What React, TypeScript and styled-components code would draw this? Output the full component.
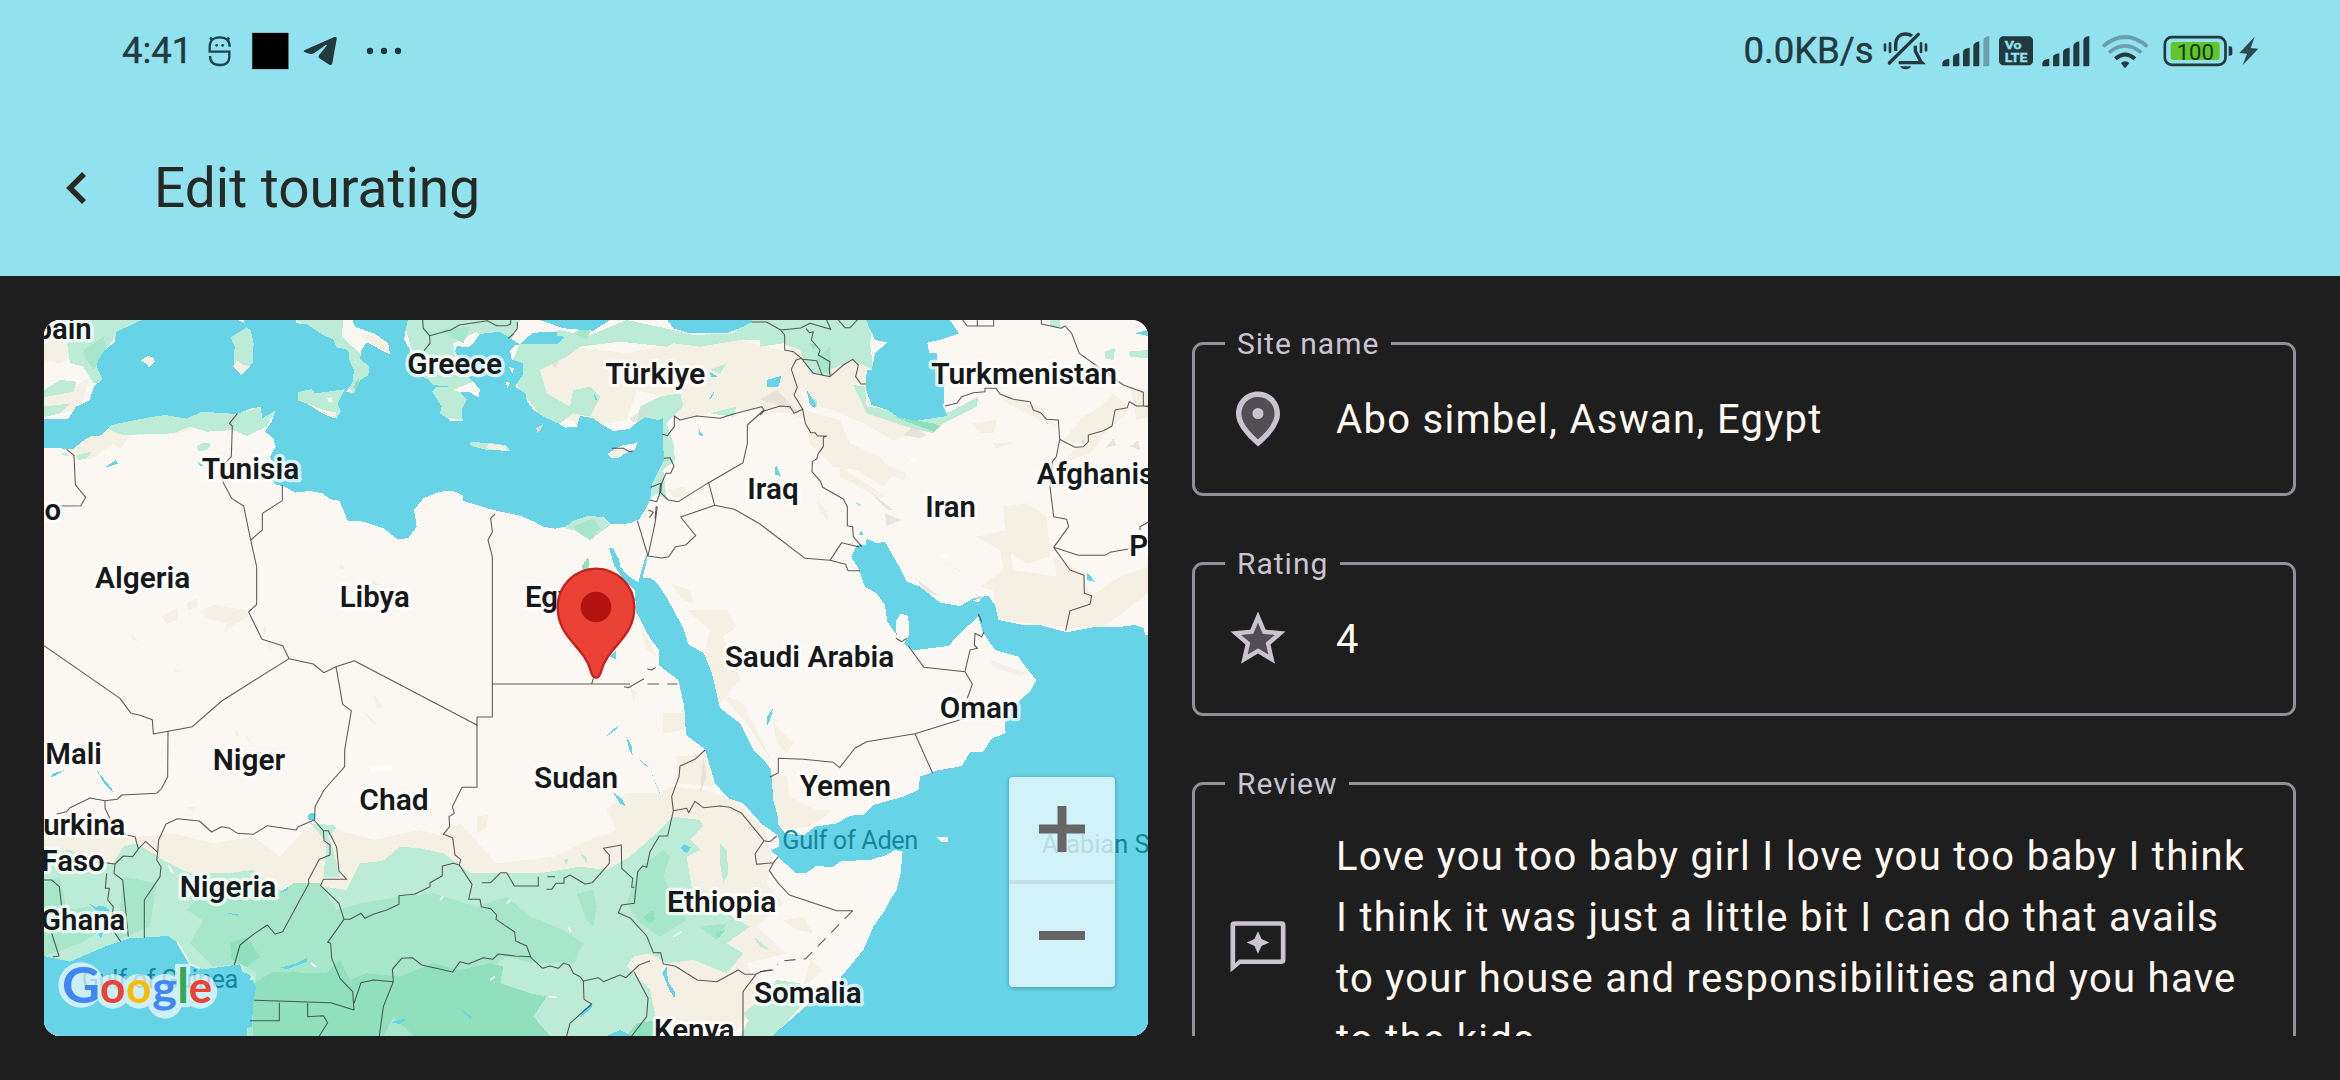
import React from 'react';
import styled, { createGlobalStyle } from 'styled-components';

const INK = '#22393d';
const FAINT = '#68a1ab';
const SKY = '#92e1ef';
const SURFACE = '#1e1e1e';

const GlobalStyle = createGlobalStyle`
  * { box-sizing: border-box; }
  body { margin: 0; background: ${SURFACE}; }
`;

const Screen = styled.div`
  width: 2340px;
  height: 1080px;
  overflow: hidden;
  background: ${SURFACE};
  font-family: Roboto, 'Liberation Sans', sans-serif;
  display: flex;
  flex-direction: column;
`;

const Header = styled.header`
  flex: none;
  height: 276px;
  background: ${SKY};
  display: flex;
  flex-direction: column;
`;

const StatusBar = styled.div`
  height: 101px;
  display: flex;
  justify-content: space-between;
  padding: 0 81px 0 122px;
  color: ${INK};
`;

const StatusGroup = styled.div`
  display: flex;
  align-items: center;
`;

const StatusText = styled.span<{ $width: number }>`
  width: ${(p) => p.$width}px;
  font-size: 36.5px;
  line-height: 42px;
  white-space: nowrap;
  -webkit-text-stroke: 0.4px ${INK};
`;

const Glyph = styled.svg<{ $w: number; $h: number; $ml?: number }>`
  display: block;
  flex: none;
  width: ${(p) => p.$w}px;
  height: ${(p) => p.$h}px;
  margin-left: ${(p) => p.$ml ?? 0}px;
`;

const AppBar = styled.div`
  flex: 1;
  display: flex;
  align-items: center;
  padding: 0 0 2px 64px;
`;

const BackButton = styled.button`
  width: 90px;
  height: 60px;
  padding: 0;
  border: 0;
  background: none;
  display: flex;
  align-items: center;
`;

const Title = styled.h1`
  margin: 0;
  font-size: 55px;
  font-weight: 400;
  line-height: 70px;
  color: #252a24;
  white-space: nowrap;
`;

const Content = styled.main`
  height: 760px;
  padding: 44px 44px 0;
  display: grid;
  grid-template-columns: 1104px 1104px;
  grid-template-rows: 716px;
  column-gap: 44px;
`;

const MapCard = styled.section`
  position: relative;
  border-radius: 16px;
  overflow: hidden;
  background: #fbf8f3;
`;

const MapCanvas = styled.svg`
  display: block;
  width: 1104px;
  height: 716px;
`;

const ZoomControl = styled.div`
  position: absolute;
  right: 33px;
  bottom: 49px;
  width: 106px;
  height: 210px;
  border-radius: 4px;
  background: rgba(255, 255, 255, 0.7);
  box-shadow: 0 1px 4px rgba(0, 0, 0, 0.32);
  display: flex;
  flex-direction: column;
`;

const ZoomButton = styled.button`
  flex: 1;
  padding: 0;
  border: 0;
  background: none;
  display: flex;
  align-items: center;
  justify-content: center;

  & + & {
    border-top: 4px solid #c3dfe5;
  }
`;

const Form = styled.section`
  overflow: hidden;
  padding: 6px 0 0;
  display: flex;
  flex-direction: column;
  gap: 50px;
`;

const FieldBox = styled.fieldset<{ $tall?: boolean }>`
  flex: none;
  min-width: 0;
  height: ${(p) => (p.$tall ? 334 : 170)}px;
  margin: 0;
  padding: ${(p) => (p.$tall ? '25px 29px 24px 30px' : '0 29px 16px 30px')};
  border: 3px solid #938f99;
  border-radius: 11px;
`;

const FieldLabel = styled.legend`
  padding: 0 12px;
  height: 35px;
  font-size: 30px;
  line-height: 35px;
  letter-spacing: 1px;
  color: #cac4d0;
`;

const FieldRow = styled.div<{ $tall?: boolean }>`
  height: ${(p) => (p.$tall ? 244 : 116)}px;
  display: flex;
  align-items: center;
  gap: 45px;
`;

const FieldValue = styled.div`
  font-size: 40px;
  line-height: 61px;
  letter-spacing: 1.290px;
  white-space: pre;
  color: #fef8f1;
`;

const HelmetIcon = () => (
  <Glyph $w={26} $h={34} $ml={16.300} viewBox="52 38 78 102" fill="none" stroke="#1d4549" strokeWidth="7">
    <path d="M120 76 C120 56 108 48 90 48 C70 48 60 60 60 76 V91 H119 V106 C119 122 108 131 90 131 C72 131 61 122 61 104" />
    <path d="M61 49 L68 55 M119 49 L112 55" strokeWidth="8" />
    <circle cx="81" cy="72" r="4" fill="#1d4549" stroke="none" />
    <circle cx="99" cy="72" r="4" fill="#1d4549" stroke="none" />
  </Glyph>
);

const SquareIcon = () => (
  <Glyph $w={39} $h={38} $ml={17.400} viewBox="182 33 117 114">
    <rect x="184" y="34" width="112" height="112" fill="#7fb4be" />
    <rect x="186" y="36" width="108" height="108" fill="#000" />
  </Glyph>
);

const TelegramIcon = () => (
  <Glyph $w={34} $h={30} $ml={13.300} viewBox="339 49 102 90">
    <path d="M343 92 L433 52 Q441 50 440 58 L427 131 Q425 138 418 135 L388 116 Q383 112 387 107 L410 78 Q412 74 407 76 L372 101 Q366 104 358 102 L343 97 Q339 95 343 92Z" fill={INK} />
  </Glyph>
);

const DotsIcon = () => (
  <Glyph $w={36} $h={10} $ml={29} viewBox="528 75 108 30" fill="#1d3438">
    <circle cx="540" cy="90" r="9.500" />
    <circle cx="582" cy="90" r="9.500" />
    <circle cx="624" cy="90" r="9.500" />
  </Glyph>
);

const MutedBellIcon = () => (
  <Glyph $w={46} $h={40} viewBox="37 32 138 120" fill="none" stroke={INK} strokeWidth="10" strokeLinecap="round">
    <path d="M75 92 V74 C75 52 88 41 105 41 C113 41 119 43 124 47" strokeLinecap="butt" />
    <path d="M56 128 L143 42" />
    <path d="M134 76 V92 L150 123 L154 127 H84" strokeLinecap="butt" />
    <path d="M88 138 H122 Q116 147 105 147 Q94 147 88 138Z" fill={INK} stroke="none" />
    <path d="M43 73 V90 M58 69 V95 M151 69 V95 M166 73 V90" strokeWidth="8" />
  </Glyph>
);

const SignalIcon = ({ weak, ml }: { weak?: boolean; ml: number }) => (
  <Glyph $w={49} $h={32} $ml={ml} viewBox="211 43 147 96" fill={INK}>
    <path d="M215 137 V126 Q218 115 236 114 V133 Q236 137 232 137Z" />
    <path d="M247 137 V108 Q249 100 266 98 V133 Q266 137 262 137Z" />
    <path d="M277 137 V93 Q279 83 297 81 V133 Q297 137 293 137Z" />
    <path d="M308 137 V76 Q309 65 326 62 V133 Q326 137 322 137Z" />
    <path d="M338 137 V60 Q339 48 356 46 V133 Q356 137 352 137Z" fill={weak ? FAINT : INK} />
  </Glyph>
);

const VolteIcon = () => (
  <Glyph $w={34} $h={30} $ml={9} viewBox="384 47 102 90">
    <rect x="384" y="48" width="102" height="87" rx="13" fill={INK} />
    <g fill={SKY} stroke={SKY} strokeWidth="1" fontFamily="Roboto, sans-serif" fontWeight="700">
      <text x="401" y="86" fontSize="34" textLength="51" lengthAdjust="spacingAndGlyphs">Vo</text>
      <text x="401" y="124" fontSize="38" textLength="68" lengthAdjust="spacingAndGlyphs">LTE</text>
    </g>
  </Glyph>
);

const WifiIcon = () => (
  <Glyph $w={48} $h={36} $ml={11} viewBox="692 36 144 108" fill="none" strokeWidth="11">
    <path d="M698 76 Q764 20 831 76" stroke={FAINT} />
    <path d="M716 95 Q764 54 813 95" stroke={FAINT} />
    <path d="M735 113 Q764 88 794 113" stroke={INK} strokeWidth="12" />
    <path d="M752 126 Q764 115 777 126 L767 139 Q764 142 761 139Z" fill={INK} />
  </Glyph>
);

const BatteryIcon = () => (
  <Glyph $w={70} $h={32} $ml={14} viewBox="877 42 210 96">
    <rect x="882.500" y="48.500" width="182" height="83" rx="21" fill="none" stroke={INK} strokeWidth="8" />
    <rect x="900" y="63" width="147" height="54" rx="8" fill="#60c62b" />
    <path d="M1074 76 h4 q7 0 7 8 v12 q0 8 -7 8 h-4Z" fill={INK} />
    <text x="974" y="116" textAnchor="middle" fontSize="68" fill="#12360e" fontFamily="Roboto, sans-serif" textLength="112" lengthAdjust="spacingAndGlyphs">
      100
    </text>
  </Glyph>
);

const BoltIcon = () => (
  <Glyph $w={20} $h={30} $ml={6.500} viewBox="1106 44 60 90">
    <path d="M1153 46 L1107 95 L1130 97 L1117 132 L1164 82 L1141 80Z" fill="#2c4b50" />
  </Glyph>
);

const PlaceIcon = () => (
  <Glyph $w={66} $h={66} viewBox="0 0 24 24" fill="#cac4d0">
    <path opacity=".3" d="M18 10.200c0 2.570-2.100 5.790-6 9.140-3.900-3.350-6-6.570-6-9.140C6 6.570 8.650 4 12 4s6 2.570 6 6.200z" />
    <path fillRule="evenodd" d="M12 2c-4.200 0-8 3.220-8 8.200 0 3.320 2.670 7.250 8 11.800 5.330-4.550 8-8.480 8-11.800C20 5.220 16.200 2 12 2zM18 10.200c0 2.570-2.100 5.790-6 9.140-3.900-3.350-6-6.570-6-9.140C6 6.570 8.650 4 12 4s6 2.570 6 6.200z" />
    <circle cx="12" cy="10" r="2" />
  </Glyph>
);

const StarIcon = () => (
  <Glyph $w={66} $h={66} viewBox="0 0 24 24" fill="#cac4d0">
    <path opacity=".3" d="M12 15.400l-3.760 2.270 1-4.280-3.320-2.880 4.380-.38L12 6.100l1.710 4.040 4.380.38-3.320 2.880 1 4.280z" />
    <path d="M22 9.240l-7.190-.62L12 2 9.190 8.630 2 9.240l5.460 4.730L5.820 21 12 17.270 18.180 21l-1.630-7.030L22 9.240zM12 15.400l-3.760 2.270 1-4.280-3.320-2.880 4.380-.38L12 6.100l1.710 4.040 4.380.38-3.320 2.880 1 4.280L12 15.400z" />
  </Glyph>
);

const ReviewIcon = () => (
  <Glyph $w={66} $h={66} viewBox="0 0 24 24" fill="#cac4d0">
    <path fillRule="evenodd" d="M20.600 2.300H3.400Q2 2.300 2 3.700V20.800L5.600 17.800H20.600Q22 17.800 22 16.400V3.700Q22 2.300 20.600 2.300ZM20.300 16.200H5.100L3.700 17.500V3.900H20.300Z" />
    <path d="M12 5.900l1.280 2.820L16.100 10l-2.820 1.280L12 14.100l-1.280-2.820L7.900 10l2.820-1.280z" />
  </Glyph>
);

type Label = { t: string; x: number; y: number; w?: number; anchor?: 'start' | 'end' };

const countries: Label[] = [
  { t: 'Spain', x: 155, y: 86, anchor: 'end' },
  { t: 'Greece', x: 1102, y: 192, w: 284 },
  { t: 'Türkiye', x: 1696, y: 222, w: 300 },
  { t: 'Turkmenistan', x: 2674, y: 222, w: 557 },
  { t: 'Tunisia', x: 485, y: 506, w: 293 },
  { t: 'Morocco', x: 63, y: 630, anchor: 'end' },
  { t: 'Algeria', x: 165, y: 833, w: 286 },
  { t: 'Libya', x: 899, y: 890, w: 210 },
  { t: 'Egypt', x: 1455, y: 891 },
  { t: 'Iraq', x: 2122, y: 566, w: 154 },
  { t: 'Iran', x: 2656, y: 620, w: 152 },
  { t: 'Afghanistan', x: 2990, y: 522 },
  { t: 'Pakistan', x: 3268, y: 737 },
  { t: 'Saudi Arabia', x: 2054, y: 1071, w: 509 },
  { t: 'Oman', x: 2699, y: 1225, w: 237 },
  { t: 'Yemen', x: 2279, y: 1458, w: 274 },
  { t: 'Mali', x: 16, y: 1361, w: 170 },
  { t: 'Niger', x: 518, y: 1380, w: 218 },
  { t: 'Chad', x: 958, y: 1500, w: 208 },
  { t: 'Sudan', x: 1482, y: 1434, w: 252 },
  { t: 'Burkina', x: 256, y: 1575, anchor: 'end' },
  { t: 'Faso', x: 194, y: 1682, anchor: 'end' },
  { t: 'Ghana', x: 256, y: 1861, anchor: 'end' },
  { t: 'Nigeria', x: 419, y: 1760, w: 290 },
  { t: 'Ethiopia', x: 1881, y: 1805, w: 328 },
  { t: 'Somalia', x: 2142, y: 2078, w: 323 },
  { t: 'Kenya', x: 1842, y: 2189, w: 242 },
];

const seas: Label[] = [
  { t: 'Gulf of Aden', x: 2227, y: 1617, w: 408 },
  { t: 'Arabian Sea', x: 3005, y: 1630 },
  { t: 'Gulf of Guinea', x: 125, y: 2033, w: 470 },
];

const BEIGE = '#f4f0e4';
const MINT = '#bcecd8';
const MINT2 = '#a8e6cc';
const MINT3 = '#90e0bd';
const WATER = '#66d3e7';
const GREY = '#dcd9d2';

const beigeNorth = [
  'M12 30H150L130 120L60 160L12 150Z',
  'M12 250L90 240L150 200L120 300L12 320Z',
  'M60 420L140 385L240 340L480 345L420 370L270 375L240 420L220 400L160 445L110 450Z',
  'M365 920L412 893L415 930L380 942ZM440 880L470 865L475 890L445 900ZM478 905L520 885L620 900L625 920L580 945L550 972L560 940L500 925Z',
  'M270 965L293 992L278 990ZM895 765L915 768L908 780ZM1000 812L1030 830L995 822ZM672 940L680 960L670 985ZM690 990L695 1022L680 1010ZM402 1078L432 1084L405 1088Z',
  'M1480 160L1600 110L1760 130L1900 100L2100 90L2260 130L2300 330L2240 310L2150 300L2050 300L1960 320L1880 320L1900 270L1790 240L1760 330L1640 350L1540 310L1480 320L1440 240L1500 200Z',
  'M2240 30H2480L2490 130L2470 250L2600 320L2680 360L2560 390L2470 340L2380 300L2330 290L2250 200Z',
  'M2290 300L2400 330L2430 400L2520 440L2560 500L2530 530L2450 480L2380 470L2310 400Z',
  'M2490 440L2600 490L2590 510L2500 470ZM2400 470L2540 560L2520 565L2400 500ZM2330 570L2360 600L2365 635L2335 600ZM2860 400L2930 395L2870 415ZM2800 340L2870 330L2860 370L2820 370Z',
  'M2870 240L3000 290L3050 350L3020 340L2900 280ZM3070 390L3130 320L3180 290L3220 250L3270 300L3230 340L3130 400ZM3270 230L3324 240V320L3290 330Z',
  'M2890 590L2960 580L3020 620L3030 740L2960 760L2900 720Z',
  'M2810 680L2900 660L2920 780L3050 800L3040 740L3130 790L3150 860L3240 800L3324 770V850L3180 960L2870 930L2860 840L2820 830L2890 780L2880 720Z',
  'M3060 460L3160 370L3230 330L3150 430Z',
  'M1890 820L1950 840L1960 880L1930 870ZM1940 900L2060 900L2090 950L2050 980L2080 1050L2100 1110L2040 1180L1990 1040L2010 960Z',
  'M1880 540L1930 530L1960 570L1900 560ZM1760 580L1830 560L1820 620L1790 630ZM1800 950L1820 980L1850 1040L1820 1020Z',
];

const beigeSouth = [
  'M12 1590L130 1575L250 1585L400 1570L520 1600L640 1580L720 1640L800 1550L900 1560L1000 1590L1140 1560L1200 1575L1260 1540L1370 1660L1540 1640L1620 1600L1730 1560L1700 1500L1760 1450L1850 1450L1900 1430L2000 1440L2080 1470L2170 1550L2200 1650L2180 1720L2230 1780L2150 1850L2240 1930L2120 1960L2160 2060L2080 2178H12Z',
  'M1870 1210L1940 1210L1930 1260L1870 1270ZM1770 1130L1790 1150L1780 1175ZM1910 1340L2000 1330L2020 1430L1910 1420ZM2040 1150L2110 1180L2180 1320L2200 1360L2120 1240Z',
  'M2180 1390L2240 1400L2250 1460L2330 1500L2380 1500L2310 1550L2220 1560L2195 1450Z',
  'M2200 1240L2260 1300L2240 1330L2210 1300ZM2230 1830L2290 1820L2320 1870L2270 1860ZM2310 1950L2350 1980L2290 2030ZM1310 1520L1345 1515L1340 1550L1310 1570ZM440 1490L465 1490L460 1510ZM965 1200L1010 1240L1000 1242ZM1000 1150L1030 1190L1010 1195ZM590 1260L600 1280L585 1275ZM620 1275L638 1300L625 1295Z',
  'M2850 1050L2960 1090L2940 1100L2860 1070Z',
];

const mintNorth = [
  'M75 30H310L230 75L190 130L190 215L160 220L130 170L90 160L80 90Z',
  'M12 240L60 210L110 215L100 245L12 262ZM12 290L90 280L60 310L12 322Z',
  'M190 350L330 318L480 305L590 310L660 292L665 325L705 303L680 350L620 378L580 360L500 365L450 350L400 370L245 375Z',
  'M470 408L490 398L515 402L500 420L475 424ZM110 435L155 425L140 445L115 450ZM60 432L80 428L85 440Z',
  'M770 30H910L905 80L960 130L990 165L985 200L940 250L900 200L880 110Z',
  'M1090 30H1440L1410 100L1330 90L1310 65L1240 100L1250 190L1310 210L1240 240L1300 260L1265 330L1200 320L1150 240Z',
  'M1440 100L1560 60L1640 80L1760 30L1900 60L1960 75L2080 70L2120 30H2240L2230 90L2100 90L1980 110L1900 100L1880 110L1740 95L1620 110L1580 140L1500 180L1520 250L1590 290L1600 240L1650 230L1680 260L1650 320L1600 310L1560 340L1500 355L1490 300L1440 240L1410 170Z',
  'M1860 260L1920 250L1930 290L1900 320L1880 340L1900 400L1905 450L1870 480L1880 570L1850 550L1800 600L1820 480L1860 400L1865 340L1790 340L1800 290Z',
  'M2010 180L2060 160L2040 190ZM2050 300L2090 290L2080 320L2010 310Z',
  'M2160 30H2500L2490 100L2500 180L2440 150L2370 180L2340 160L2370 200L2310 190L2280 120L2230 100L2160 110Z',
  'M2440 225L2475 230L2480 290L2560 300L2600 325L2690 320L2740 300L2815 260L2810 290L2710 340L2680 370L2600 350L2480 310Z',
  'M3195 125L3225 115L3220 150L3195 145ZM3265 125L3324 120V145L3270 140ZM3030 30H3060V55L3030 48ZM3125 392L3135 390L3130 405ZM2445 575L2465 585L2455 590ZM2300 250L2330 270L2330 290Z',
  'M1575 655L1600 630L1645 615L1690 622L1712 645L1690 660L1650 692L1620 665ZM1645 740L1647 775L1630 785L1625 770Z',
];

const mintSouth = [
  'M12 1630L90 1620L130 1640L220 1660L250 1610L290 1600L370 1650L450 1690L560 1690L640 1680L720 1740L800 1750L850 1730L920 1740L960 1660L1060 1650L1150 1620L1210 1630L1290 1690L1500 1690L1620 1670L1700 1680L1770 1640L1860 1560L1900 1520L1980 1530L1990 1550L1950 1590L1980 1620L1940 1640L1960 1760L2040 1800L2130 1850L2060 1900L2110 1930L2060 1990L1960 1950L1880 1960L1830 1930L1780 1940L1760 1970L1830 2040L1860 2178H12Z',
  'M810 1540L880 1545L890 1555L865 1580L880 1620L900 1700L850 1700L860 1600L830 1560Z',
  'M1140 1615L1210 1630V1800H1100L1020 1660L1080 1610Z',
  'M2040 1600L2060 1620L2065 1690L2050 1720L2040 1660ZM1570 1650L1585 1645L1580 1665ZM1620 1630L1640 1640L1640 1660ZM2140 1880L2190 1920L2160 1910Z',
  'M2160 2070L2210 2010L2280 2020L2300 2070L2200 2178H2160L2110 2110ZM2100 2178L2160 2070L2220 2010L2250 2080L2190 2178Z',
];

const mint2 = [
  'M12 1720L60 1700L80 1800L150 1790L200 1850L120 1900L12 1940ZM500 1740L640 1710L700 1760L760 1720L840 1720L890 1800L960 1780L1080 1760L1180 1750L1310 1790L1400 1760L1470 1820L1570 1860L1630 1900L1600 1960L1480 1960L1400 1940L1330 1990L1340 2178H620L650 1990L600 1960L520 1970L450 1900L490 1830L440 1800Z',
  'M1800 1670L1870 1620L1890 1640L1870 1700L1900 1760L1940 1830L1860 1880L1800 1840L1760 1780ZM1980 1850L2060 1840L2030 1890ZM1610 1750L1660 1740L1670 1790L1660 1850L1640 1830ZM250 1700L350 1720L330 1850L230 1890Z',
  'M1600 650L1660 625L1680 655L1650 690L1610 665ZM130 120L190 80L200 120L160 180L140 150ZM2330 150L2370 110L2375 195L2345 185ZM1600 70L1660 40L1640 90ZM1200 60L1290 50L1270 100ZM1260 2020L1370 1980L1400 2060Z',
];

const mint3 = [
  'M640 2020L700 1985L860 1990L900 1950L930 2010L980 1990L1080 2000L1180 1960L1260 1980L1350 1960L1390 1970L1380 2020L1470 2050L1520 2060L1480 2120L1530 2178H1120L1060 2120L1030 2178H640ZM570 1900L620 1880L660 1940L620 1970L575 1950Z',
  'M1810 1820L1840 1800L1845 1830L1830 1840ZM2025 1870L2055 1860L2035 1885ZM1790 2140L1850 2130V2178H1760ZM2560 320L2680 340L2700 350L2680 365L2640 350ZM940 230L955 205L960 225L945 240ZM1625 770L1645 740L1647 765L1635 785ZM1140 235L1155 232L1152 245ZM2310 100L2330 105L2320 120Z',
];

const greys = [
  'M1770 325L1820 290L1835 280L1825 305L1780 340ZM2160 270L2210 240L2280 310L2230 290L2200 280ZM2590 375L2620 350L2660 375L2640 385ZM2485 540L2560 600L2540 598ZM2535 610L2585 630L2540 648ZM3195 415L3220 385L3230 405ZM3270 410L3295 390L3300 420ZM2620 800L2700 860L2660 845ZM2690 740L2770 790L2760 785ZM1530 160L1555 150L1550 175ZM1640 270L1670 275L1665 295ZM2470 270L2490 300L2480 310ZM1990 1340L2000 1400L1980 1450Z',
];

const waters = [
  // Mediterranean and its northern gulfs
  'M305 30L262 50L228 66L225 95L193 122L175 150L170 170L188 208L162 228L148 272L108 290L85 326H0V413L60 415L100 418L125 395L150 380L185 376L215 345L250 337L330 322L375 315L440 326L485 305L590 312L640 293L662 292L667 325L705 303L695 335L675 365L700 385L707 410L690 440L705 470L703 522L735 530L765 548L810 543L850 551L868 567L898 572L910 600L923 632L970 635L1030 655L1075 689L1105 684L1130 650L1122 600L1150 565L1200 545L1240 543L1268 555L1270 573L1310 585L1360 600L1440 617L1480 634L1510 650L1545 656L1578 650L1600 632L1645 617L1690 622L1712 643L1770 640L1797 628L1812 605L1830 570L1837 520L1855 485L1872 450L1868 380L1868 325L1855 330L1815 322L1780 345L1770 357L1720 363L1680 340L1660 325L1620 318L1610 350L1575 353L1555 340L1510 320L1480 300L1460 272L1458 252L1425 230L1448 195L1450 160L1415 148L1410 120L1425 105L1440 103L1410 85L1380 65L1320 72L1300 100L1285 112L1250 108L1245 125L1265 150L1270 185L1335 195L1285 200L1300 215L1320 240L1315 262L1285 245L1260 248L1280 268L1265 300L1268 332L1232 332L1200 310L1205 290L1177 245L1190 230L1250 232L1180 225L1165 208L1120 190L1110 120L1092 88L1103 30H937L945 50L1005 72L1045 100L1050 133L1020 118L980 97L965 118L960 145L987 170L985 195L962 210L942 250L918 245L937 220L942 180L928 150L925 120L890 112L880 88L850 76L800 42L768 40V30H612V40L596 30Z',
  'M1440 103L1478 68L1550 66V78L1575 80L1550 103Z',
  'M1500 30L1570 55L1660 62L1710 30ZM1882 30L1900 55L1950 70L2060 70L2110 50L2135 36V30Z',
  // Caspian
  'M2478 30L2505 90L2542 97L2505 130L2495 180H2480L2478 240L2495 285L2545 300L2575 322L2630 332L2722 318L2710 290L2714 220L2690 215V130L2668 128L2662 98L2705 88L2757 70L2730 30Z',
  // Indian Ocean with the Gulf and the Red Sea
  'M3324 975L3315 975L3312 955L3285 945L3230 952L3160 952L3080 967L3000 945L2950 945L2875 930L2865 885L2845 857L2800 865L2760 888L2700 878L2640 830L2600 815L2575 765L2535 695L2510 700L2480 686L2478 705L2450 706L2433 740L2455 775L2475 830L2510 850L2535 885L2542 935L2570 975L2567 935L2582 910L2605 918L2607 975L2592 1002L2620 1021L2725 1008L2765 965L2815 920L2830 970L2865 1020L2935 1040L2960 1075L2989 1110L2970 1145L2940 1170L2920 1190L2895 1240L2897 1270L2855 1285L2830 1325L2790 1327L2765 1368L2690 1382L2640 1400L2635 1440L2590 1460L2500 1485L2470 1515L2430 1517L2390 1540L2325 1550L2290 1577L2235 1570L2215 1545L2213 1520L2200 1470L2193 1380L2172 1350L2140 1320L2100 1240L2040 1194L2016 1090L1992 1030L1945 1003L1930 955L1880 862L1850 818L1830 804L1808 803L1824 735H1818L1802 790L1795 818L1765 798L1740 770L1738 750L1718 713L1708 715L1722 765L1750 810L1785 840L1788 905L1830 985L1857 1020L1857 1066L1915 1110L1933 1190L1938 1275L1995 1318L2025 1420L2065 1465L2110 1480L2165 1542L2215 1577L2218 1610L2192 1622L2215 1640L2265 1688H2300L2330 1667L2375 1672L2405 1653L2490 1650L2540 1635L2565 1620L2588 1625L2582 1690L2570 1740L2550 1770L2535 1800L2500 1850L2470 1920L2400 2005L2290 2095L2196 2178H3324Z',
  // Gulf of Guinea
  'M12 1938L90 1955L200 1908L270 1885L385 1878L412 1897L450 1965L490 1978L600 1963L607 1985L630 1995L648 2030L640 2080L635 2150L620 2155V2178H12Z',
  // lakes
  'M195 472L228 450L234 460L205 470ZM472 455L490 465L482 470ZM2180 210L2225 197L2215 230H2182ZM2300 240L2330 285L2325 294L2310 285ZM2205 495L2207 462L2222 497ZM2455 675L2467 660L2468 675ZM3140 785L3165 815L3140 810ZM1975 355L1992 380L1978 375ZM2010 185L2032 200L2012 200ZM2005 270L2025 240L2015 265ZM1710 1040L1728 1022V1048ZM3285 70L3324 60V78ZM1662 250L1672 270L1665 270Z',
  'M804 1520A11 11 0 1 1 826 1520A11 11 0 1 1 804 1520ZM33 1403L38 1390L72 1381L50 1395ZM168 1378L215 1435L218 1446L192 1420ZM1702 1277L1720 1258L1734 1248L1730 1258ZM1758 1278L1776 1310L1778 1337L1768 1320ZM1790 1342L1828 1372L1815 1368ZM1833 1385L1862 1455L1850 1430ZM1720 1448L1745 1465L1758 1490L1740 1480ZM2180 1250L2182 1220L2201 1192L2190 1230ZM1922 1615L1932 1602L1953 1612L1940 1630ZM1867 1990L1880 1970L1884 2015L1905 2045L1903 2065L1886 2035ZM1620 2122L1632 2098L1656 2082L1655 2095ZM1258 2093L1295 2120L1294 2128ZM144 1778L165 1790L190 1788L210 1800L180 1812ZM172 1868L190 1868L182 1885ZM722 1973L770 1960L800 1945L802 1955L740 1978ZM715 1750L745 1730L742 1742ZM555 1808L597 1813L594 1818ZM1054 2138L1075 2130L1103 2126L1080 2142ZM1700 2178L1740 2160L1775 2178Z',
];

const islands = [
  { d: 'M572 82L620 52L632 60L641 100L638 158L605 194L580 172L584 110Z', f: MINT },
  { d: 'M590 150L610 165L630 168L605 194L580 172Z', f: BEIGE },
  { d: 'M302 152L322 138L340 142L344 155L327 172L318 160Z', f: BEIGE },
  { d: 'M773 247L815 237L825 250L914 238L893 280L902 305L890 326L850 312L800 280L775 272Z', f: MINT },
  { d: 'M800 280L850 300L890 308L885 326L850 312Z', f: BEIGE },
  { d: 'M862 265L875 262L878 275L866 278Z', f: '#fff' },
  { d: 'M960 70L1005 80L1045 105L1050 133L1020 118L975 92Z', f: BEIGE },
  { d: 'M1290 397L1345 398L1395 405L1412 422L1340 420L1292 408Z', f: MINT },
  { d: 'M1345 402L1398 408L1400 424L1340 415Z', f: BEIGE },
  { d: 'M1703 432L1720 420L1750 405L1780 402L1795 395L1782 422L1755 430L1735 445L1715 444Z', f: BEIGE },
  { d: 'M1750 405L1780 402L1795 395L1780 422L1755 425Z', f: '#fff' },
  { d: 'M1488 355L1510 342L1500 362L1492 368Z', f: GREY },
  { d: 'M1405 170L1422 175L1418 190ZM1397 215L1410 218L1402 235ZM2798 872L2825 862L2815 878Z', f: BEIGE },
  { d: 'M2690 1582L2724 1580V1595L2703 1595Z', f: '#fbf8f3' },
  { d: 'M984 1372L1050 1366L1058 1374L1040 1384L1000 1384ZM2700 737L2720 730L2730 738L2710 745ZM2610 448L2618 440L2630 452L2620 460ZM3045 675L3060 660L3055 680Z', f: '#fff' },
];

const borders = [
  // Maghreb and Sahara
  'M80 418L102 436L106 524L137 562L122 587L60 588M592 311L568 340L577 348L574 440L560 455L540 480L550 518L575 565L611 588L632 690L650 770L650 883L626 906L666 988L728 1007L747 1046L640 1113L545 1173L457 1250L340 1272L337 1229L300 1216L273 1210L240 1165L12 1007',
  'M727 525V572L667 610V660L632 690M747 1046L820 1062L851 1088L888 1070L943 1052L1312 1246M888 1070L908 1183L934 1202L914 1320V1370L852 1440L825 1490L824 1530',
  'M1365 612L1352 625L1357 665L1344 690L1357 740V1221H1311V1432H1266L1250 1465L1237 1490L1243 1510L1227 1520L1229 1550L1210 1573L1238 1583L1245 1635L1262 1648L1258 1665L1296 1723L1286 1768H1320L1324 1790L1352 1796L1370 1815L1368 1828L1424 1866L1427 1893L1460 1908L1473 1943L1508 1975L1530 1968L1555 1975L1570 1960L1588 1965L1600 1990L1620 2000L1630 2013L1675 2003L1690 2015L1740 1995L1758 2003L1797 1965L1830 1952',
  'M1357 1122H1770M1822 1122H1857M1882 1122H1912M1752 1130L1765 1133L1812 1106M1655 1122L1660 1105M1822 1077L1835 1080L1847 1072M1792 632L1824 738L1845 640L1852 590M1824 738L1865 744L1886 740L1907 710L1937 705L1967 677L1922 621L2024 586L2006 518M2024 586L2083 598L2160 642L2295 745L2370 751L2417 763L2424 782H2460M2370 751L2405 698L2458 711',
  // Levant, Syria, Iraq
  'M1867 372L1882 377L1903 350V318L1920 330L1970 318L2040 325L2080 312L2165 290L2172 300L2122 345V400L2109 458L2006 518L1915 575L1885 570L1862 548L1865 520L1878 490H1892L1902 468L1890 443L1872 445M1832 532L1862 520L1858 555L1850 575L1830 570M1825 600L1840 607L1828 623M1849 588L1845 625',
  'M2160 315L2172 303L2220 288L2250 290L2262 310L2288 298L2296 340L2312 368L2325 368L2333 378L2360 378L2350 382V410L2335 430L2330 447L2317 455L2316 485L2342 515L2348 532L2410 567L2422 590V647L2438 650L2440 680L2465 710',
  'M2288 298L2262 255L2272 232L2254 178L2268 150L2285 145L2292 155L2320 190L2370 200L2410 165L2438 148L2455 165L2447 200L2463 222H2478M2135 36H2180L2222 60L2234 75V120L2260 125L2288 148L2330 152L2347 197M2222 60L2282 54L2310 40L2372 58L2360 30M2298 56L2308 68L2320 65L2314 90L2340 120L2335 135L2370 155L2368 180L2370 200M2395 30L2415 53H2430L2452 30',
  'M1148 30L1150 55L1169 77L1232 60L1258 45L1342 32L1370 47H1400L1412 42V30M1169 77L1170 100L1152 122M1432 36V55L1420 72L1405 85',
  // Central Asia
  'M2768 30L2782 48H2861V30M2812 30V48M3004 30V42L3063 55L3075 48L3095 70L3110 110L3118 130L3250 225L3310 247V288L3324 290M2715 288L2750 280L2765 260L2800 248L2835 245V235H2868L2880 252L2920 268L2970 275L2980 300L3002 308L3020 328L3055 330L3059 388L3105 412L3130 410L3145 395V375L3190 362L3216 348L3225 300L3262 293L3268 275L3290 288H3324M3059 388L3049 440L3037 455L3030 530L3041 620L3080 628L3086 650L3041 712L3115 736H3195L3210 727L3270 716M3041 712L3090 780L3132 796L3133 850L3155 857L3150 883L3090 902L3077 962M3300 660V650L3324 637',
  // Arabia
  'M2605 1008L2652 1072L2775 1085L2797 1122L2782 1165M2775 1085L2790 1020L2813 1015L2803 1005L2805 970L2825 980L2832 965M2815 912L2825 935M2775 1225L2625 1271L2678 1390M2625 1271L2480 1295L2445 1314L2399 1373L2380 1357L2290 1348L2215 1345V1388L2190 1401M2568 985L2585 995L2600 985',
  // Horn of Africa
  'M1995 1320L1965 1348L1920 1368L1917 1400L1895 1460L1900 1502L1883 1578H1858L1830 1625L1820 1672L1808 1668L1793 1685L1783 1780L1745 1785L1735 1808L1772 1825L1820 1878L1840 1928L1862 1928L1870 1962L1905 1968L1972 2010L2030 2015L2095 1980L2115 1993H2148L2162 1985L2200 1980M1900 1502L1940 1495L1946 1508L1965 1474L1990 1493L2040 1488L2070 1492L2105 1510L2172 1592L2145 1632L2150 1663L2200 1658L2215 1640M2172 1592L2190 1595L2210 1578M2200 1658L2188 1682L2215 1720L2248 1755L2390 1802H2438M2148 1993L2109 2045V2178M1782 1985L1824 2065L1820 2120L1775 2178M1630 2013L1632 2068L1655 2082L1590 2140L1580 2178',
  'M1783 1732H1775L1778 1705L1745 1675L1744 1605L1690 1615L1708 1635V1660L1657 1718L1635 1722L1590 1695L1572 1705V1720H1548L1535 1738H1520M1545 1700H1522M1495 1700V1728H1423L1400 1688H1382L1352 1718H1325',
  // West and Central Africa
  'M384 1264L383 1400L365 1435L350 1450L245 1455L232 1468L195 1472L150 1464L90 1493L80 1505L50 1512M195 1472V1495L212 1530L260 1575L285 1580L295 1617M295 1617L317 1594L353 1627L356 1590L378 1542L412 1526L478 1533L515 1566L545 1550L570 1555L592 1570L640 1573L682 1547L768 1560L775 1550L822 1530L850 1562L852 1592L870 1605V1635L838 1648L805 1710L807 1720L728 1865L705 1872L682 1845L640 1873L600 1905L583 1965M353 1627L350 1650L363 1670L360 1700L313 1770V1883M295 1617L278 1640L250 1638L225 1662L222 1690L248 1710L265 1880M225 1662L170 1655M200 1690L196 1735L208 1735L203 1770L220 1790L212 1850L242 1895M12 1710L35 1710L58 1730L65 1790M35 1870L57 1938L38 1940',
  'M852 1562H865L890 1612L897 1683L920 1708L850 1708L842 1727L897 1780L912 1828L930 1828L963 1810L975 1825L1000 1813L1040 1800L1077 1783V1757L1125 1752L1170 1730V1718L1207 1697V1668L1240 1660L1258 1665M912 1828L863 1897L872 1900L875 1945L900 2005L938 2045L942 2100L873 2078L643 2071M718 2078V2132H630M803 2080V2120L850 2117L863 2138L838 2178M942 2080L963 2018L1000 2010L1060 2015L1030 2090L1018 2178M1060 2015L1057 1978L1085 1945L1117 1943L1145 1965L1238 1986L1260 1955L1285 1962L1330 1943L1358 1948L1375 1932L1425 1938L1472 1940',
  'M1715 415L1750 415L1768 425L1780 422',
];

const snow = 'M1200 1770L1210 1758M1400 1780L1412 1770M1585 1850L1592 1865M1900 1880L1925 1865M812 1958L828 1970L818 1965M630 2010L640 2000M1350 2010L1365 2000M1525 2060L1550 2062M385 1665L400 1690L390 1680M412 1897L450 1962L480 1976';

const logo = [
  { c: 'G', x: 66, fill: '#4285f4', w: 114, size: 148 },
  { c: 'o', x: 180, fill: '#ea4335', w: 76, size: 132 },
  { c: 'o', x: 259, fill: '#fbbc05', w: 76, size: 132 },
  { c: 'g', x: 337, fill: '#4285f4', w: 74, size: 132 },
  { c: 'l', x: 412, fill: '#34a853', w: 35, size: 142 },
  { c: 'e', x: 446, fill: '#ea4335', w: 70, size: 132 },
];

const shapes = (list: string[], fill: string) => list.map((d, i) => <path key={fill + i} d={d} fill={fill} />);

const MapView = () => (
  <MapCanvas viewBox="12 30 3312 2148">
    <rect x="12" y="30" width="3312" height="2148" fill="#fbf8f3" />
    <g shapeRendering="crispEdges">
      {shapes(beigeNorth, BEIGE)}
      {shapes(beigeSouth, BEIGE)}
      {shapes(mintNorth, MINT)}
      {shapes(mintSouth, MINT)}
      {shapes(mint2, MINT2)}
      {shapes(mint3, MINT3)}
      <g opacity="0.6">{shapes(greys, GREY)}</g>
      {shapes(waters, WATER)}
      {islands.map((s, i) => (
        <path key={i} d={s.d} fill={s.f} />
      ))}
    </g>
    <path d={snow} stroke="#fff" strokeWidth="4" fill="none" />
    <g fill="none" stroke="#333" strokeOpacity="0.8" strokeWidth="3.200" strokeLinejoin="round">
      {borders.map((d, i) => (
        <path key={i} d={d} />
      ))}
      <path d="M2438 1802L2297 1946L2225 1953L2212 1965M2160 1985L2200 1978" strokeDasharray="34 24" />
    </g>
    <g fontFamily="Roboto, sans-serif" fontSize="76" fill="#17859b">
      {seas.map((l) => (
        <text key={l.t} x={l.x} y={l.y} textLength={l.w}>
          {l.t}
        </text>
      ))}
    </g>
    <g
      fontFamily="Roboto, sans-serif"
      fontSize="88"
      fontWeight="600"
      fill="#17181a"
      stroke="#ffffff"
      strokeOpacity="0.72"
      strokeWidth="20"
      strokeLinejoin="round"
      paintOrder="stroke"
    >
      {countries.map((l) => (
        <text key={l.t} x={l.x} y={l.y} textAnchor={l.anchor} textLength={l.w} lengthAdjust="spacingAndGlyphs">
          {l.t}
        </text>
      ))}
    </g>
    <path
      d="M1668 1103C1660 1103 1655 1094 1652 1082C1630 1005 1553 985 1553 891A115 115 0 0 1 1783 891C1783 985 1706 1005 1684 1082C1681 1094 1676 1103 1668 1103Z"
      fill="#ea4335"
      stroke="#c5221f"
      strokeWidth="7"
    />
    <circle cx="1668" cy="891" r="46" fill="#b31412" />
    <g opacity="0.66" fill="#fff">
      <circle cx="123" cy="2025" r="68" />
      <circle cx="218" cy="2044" r="52" />
      <circle cx="297" cy="2044" r="52" />
      <circle cx="375" cy="2044" r="52" />
      <circle cx="375" cy="2074" r="52" />
      <rect x="405" y="1962" width="46" height="130" rx="4" />
      <circle cx="480" cy="2044" r="52" />
    </g>
    <g fontFamily="Lato, sans-serif" fontWeight="700">
      {logo.map((l, i) => (
        <text key={i} x={l.x} y="2078" fontSize={l.size} fill={l.fill} textLength={l.w} lengthAdjust="spacingAndGlyphs">
          {l.c}
        </text>
      ))}
    </g>
  </MapCanvas>
);

type FieldProps = { label: string; icon: React.ReactNode; tall?: boolean; children: React.ReactNode };

const Field = ({ label, icon, tall, children }: FieldProps) => (
  <FieldBox $tall={tall}>
    <FieldLabel>{label}</FieldLabel>
    <FieldRow $tall={tall}>
      {icon}
      <FieldValue>{children}</FieldValue>
    </FieldRow>
  </FieldBox>
);

const review = [
  'Love you too baby girl I love you too baby I think',
  'I think it was just a little bit I can do that avails',
  'to your house and responsibilities and you have',
  'to the kids',
].join('\n');

export default function App() {
  return (
    <Screen>
      <GlobalStyle />
      <Header>
        <StatusBar>
          <StatusGroup>
            <StatusText $width={69}>4:41</StatusText>
            <HelmetIcon />
            <SquareIcon />
            <TelegramIcon />
            <DotsIcon />
          </StatusGroup>
          <StatusGroup>
            <StatusText $width={139}>0.0KB/s</StatusText>
            <MutedBellIcon />
            <SignalIcon weak ml={12} />
            <VolteIcon />
            <SignalIcon ml={8} />
            <WifiIcon />
            <BatteryIcon />
            <BoltIcon />
          </StatusGroup>
        </StatusBar>
        <AppBar>
          <BackButton aria-label="Back">
            <Glyph $w={24} $h={36} viewBox="0 0 24 36" fill="none" stroke="#252a24" strokeWidth="5.500">
              <path d="M20 4L6 18L20 32" />
            </Glyph>
          </BackButton>
          <Title>Edit tourating</Title>
        </AppBar>
      </Header>
      <Content>
        <MapCard>
          <MapView />
          <ZoomControl>
            <ZoomButton aria-label="Zoom in">
              <Glyph $w={46} $h={46} viewBox="0 0 46 46">
                <path d="M18.500 0h9v18.500h18.500v9h-18.500v18.500h-9v-18.500h-18.500v-9h18.500z" fill="#666" />
              </Glyph>
            </ZoomButton>
            <ZoomButton aria-label="Zoom out">
              <Glyph $w={46} $h={9} viewBox="0 0 46 9">
                <rect width="46" height="9" fill="#666" />
              </Glyph>
            </ZoomButton>
          </ZoomControl>
        </MapCard>
        <Form>
          <Field label="Site name" icon={<PlaceIcon />}>Abo simbel, Aswan, Egypt</Field>
          <Field label="Rating" icon={<StarIcon />}>4</Field>
          <Field label="Review" icon={<ReviewIcon />} tall>{review}</Field>
        </Form>
      </Content>
    </Screen>
  );
}
